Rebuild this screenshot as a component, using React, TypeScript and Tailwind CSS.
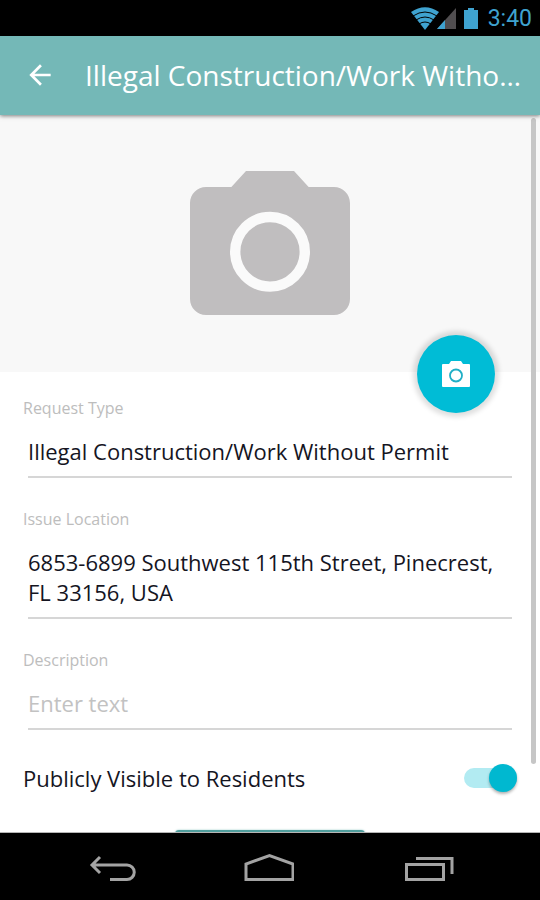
import { ReactNode, useState } from 'react';

const CAMERA_BODY =
  'M9 2L7.17 4H4c-1.1 0-2 .9-2 2v12c0 1.1.9 2 2 2h16c1.1 0 2-.9 2-2V6c0-1.1-.9-2-2-2h-3.17L15 2z';

function StatusBar() {
  return (
    <div className="flex h-9 shrink-0 items-center justify-end gap-2 bg-black pt-0.5 pr-2 text-[#3fa3d0]">
      <svg className="h-6 w-[70px]" viewBox="12 0 70 24" aria-hidden="true">
        <path d="M13 5q14-9.500 28 0L27 23z" fill="currentColor" />
        <path
          d="M15 9q12-8 24 0M18 13q9-6 18 0M21 17q6-4 12 0"
          fill="none"
          stroke="#000"
          strokeWidth="1"
        />
        <path d="M58 1v21H39z" fill="#514e50" />
        <path d="M47 13v9h-8z" fill="currentColor" />
        <path d="M70 1h6v2h4v19H66V3h4z" fill="currentColor" />
      </svg>
      <time className="font-['Roboto',sans-serif] text-[23px] leading-6">3:40</time>
    </div>
  );
}

function Header({ title }: { title: string }) {
  return (
    <header className="z-10 flex h-[79px] shrink-0 items-center bg-[#74b8b7] pr-[18px] pb-0.5 pl-6 text-white shadow-[0_1px_4px_rgba(0,0,0,0.5)]">
      <button type="button" aria-label="Back" className="mr-[29px] shrink-0">
        <svg className="size-8" viewBox="0 0 24 24" fill="currentColor">
          <path d="M20 11H7.830l5.590-5.590L12 4l-8 8 8 8 1.410-1.410L7.830 13H20z" />
        </svg>
      </button>
      <h1 className="min-w-0 truncate text-[28px] leading-10">{title}</h1>
    </header>
  );
}

function Field({ id, label, children }: { id: string; label: string; children: ReactNode }) {
  return (
    <div className="flex flex-col gap-4">
      <label htmlFor={id} className="text-base leading-6 text-[#bdbdbd]">
        {label}
      </label>
      {children}
    </div>
  );
}

const inputClass =
  'mx-[5px] block resize-none overflow-hidden rounded-none border-b-2 border-[#d6d6d6] bg-transparent pb-2.5 text-[22px] leading-[30px] text-[#15151f] outline-none placeholder:text-[#c2c2c2]';

function NavBar() {
  return (
    <nav className="flex h-[67px] shrink-0 items-center justify-center gap-[108px] bg-black pt-0.5 text-[#a3a3a3]">
      <button type="button" aria-label="Back">
        <svg className="h-8 w-[50px]" viewBox="0 0 50 32" fill="none" stroke="currentColor" strokeWidth="3">
          <path d="M14 5l-8 8 8 8M6 13h35a7 7 0 0 1 0 14.500H24" />
        </svg>
      </button>
      <button type="button" aria-label="Home">
        <svg className="h-8 w-[50px]" viewBox="0 0 50 32" fill="none" stroke="currentColor" strokeWidth="3">
          <path d="M2 27.500V12L25.500 3.500 49 12v15.500z" />
        </svg>
      </button>
      <button type="button" aria-label="Recent apps">
        <svg className="h-8 w-[52px]" viewBox="0 0 52 32" fill="none" stroke="currentColor" strokeWidth="3">
          <path d="M4.500 12.500h37v15h-37zM14 6.500h36V22" />
        </svg>
      </button>
    </nav>
  );
}

export default function App() {
  const [requestType, setRequestType] = useState('Illegal Construction/Work Without Permit');
  const [location, setLocation] = useState('6853-6899 Southwest 115th Street, Pinecrest, FL 33156, USA');
  const [description, setDescription] = useState('');
  const [visible, setVisible] = useState(true);

  return (
    <div className="flex h-screen flex-col bg-white font-['Open_Sans',sans-serif]">
      <StatusBar />
      <Header title={requestType} />

      <main className="relative flex-1 overflow-hidden border-b border-[#b5b5b5]">
        {/* Photo placeholder */}
        <div className="relative flex h-[257px] items-start justify-center bg-[#f8f8f8] pt-10">
          <svg className="size-48" viewBox="0 0 24 24" aria-hidden="true">
            <path d={CAMERA_BODY} fill="#c0bebf" />
            <circle cx="12" cy="12.100" r="4.350" fill="none" stroke="#fafafa" strokeWidth="1.300" />
          </svg>
          <button
            type="button"
            aria-label="Add photo"
            className="absolute right-[45px] -bottom-[41px] flex size-[78px] items-center justify-center rounded-full bg-[#00bcd6] shadow-[0_0_5px_4px_rgba(0,0,0,0.13)]"
          >
            <svg className="h-[26px] w-7" viewBox="0 0 28 26">
              <path d="M9 0h10l2 3h6q1 0 1 1v21q0 1-1 1H1q-1 0-1-1V4q0-1 1-1h6z" fill="#fff" />
              <circle cx="14" cy="14.500" r="6" fill="none" stroke="#20afc6" strokeWidth="1.800" />
            </svg>
          </button>
        </div>

        <form className="flex flex-col px-[23px] pt-6">
          <div className="flex flex-col gap-[29px]">
            <Field id="request-type" label="Request Type">
              <input
                id="request-type"
                className={inputClass}
                value={requestType}
                onChange={(e) => setRequestType(e.target.value)}
              />
            </Field>
            <Field id="location" label="Issue Location">
              <textarea
                id="location"
                rows={2}
                className={inputClass}
                value={location}
                onChange={(e) => setLocation(e.target.value)}
              />
            </Field>
            <Field id="description" label="Description">
              <input
                id="description"
                className={inputClass}
                placeholder="Enter text"
                value={description}
                onChange={(e) => setDescription(e.target.value)}
              />
            </Field>
          </div>

          <div className="mt-[33px] flex items-center justify-between">
            <label htmlFor="visible" className="text-[22px] leading-[30px] text-[#15151f]">
              Publicly Visible to Residents
            </label>
            <input
              id="visible"
              type="checkbox"
              role="switch"
              checked={visible}
              onChange={(e) => setVisible(e.target.checked)}
              className="relative h-5 w-[53px] appearance-none rounded-full bg-[#d5d5d5] before:absolute before:-top-1 before:left-0 before:size-7 before:rounded-full before:bg-white before:shadow-[0_2px_3px_rgba(0,0,0,0.3)] checked:bg-[#b2ebf2] checked:before:left-[25px] checked:before:bg-[#00b8d0]"
            />
          </div>

          <button
            type="submit"
            aria-label="Submit"
            className="mt-[37px] h-14 w-[190px] self-center rounded-sm bg-[#4f9d9c] shadow-[0_0_2px_rgba(116,184,183,0.8)]"
          />
        </form>

        {/* Scroll indicator */}
        <div className="absolute top-[3px] right-1 h-[646px] w-[5px] rounded-sm bg-[#c6c6c6]" />
      </main>

      <NavBar />
    </div>
  );
}
